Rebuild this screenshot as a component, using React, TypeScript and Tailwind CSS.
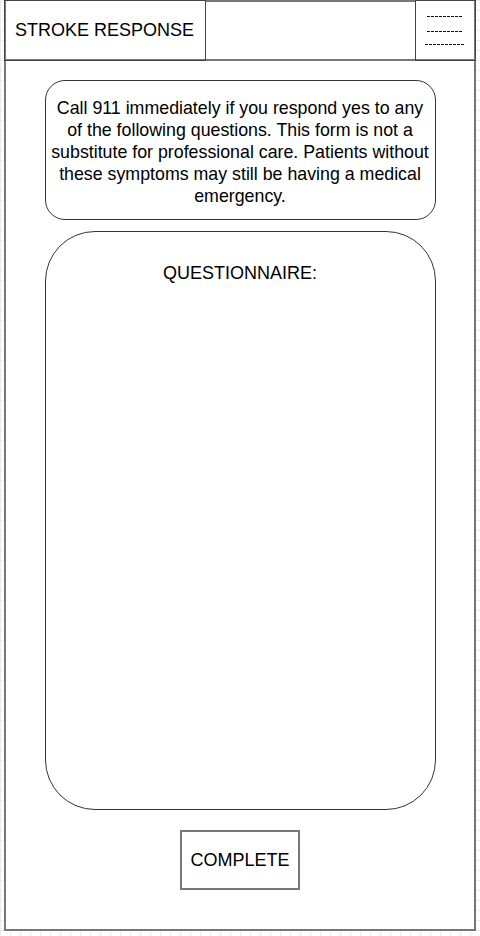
import React from 'react';

function MenuGlyph() {
  return (
    <svg width="60" height="60" viewBox="0 0 60 60" className="block">
      <line x1="11" y1="15.5" x2="46" y2="15.5" stroke="#111" strokeWidth="1" strokeDasharray="3 1" />
      <line x1="11" y1="30.5" x2="46" y2="30.5" stroke="#111" strokeWidth="1" strokeDasharray="3 1" />
      <line x1="9" y1="43.5" x2="48" y2="43.5" stroke="#111" strokeWidth="1" strokeDasharray="3 1" />
    </svg>
  );
}

const noticeLines = [
  'Call 911 immediately if you respond yes to any',
  'of the following questions. This form is not a',
  'substitute for professional care. Patients without',
  'these symptoms may still be having a medical',
  'emergency.',
];

export default function App() {
  return (
    <div className="w-[480px] h-[936px] bg-white bg-[linear-gradient(to_right,#ececec_1px,transparent_1px),linear-gradient(to_bottom,#ececec_1px,transparent_1px)] bg-[size:10px_10px] font-['Liberation_Sans',Arial,sans-serif] text-black overflow-hidden">
      <div className="ml-[4px] w-[472px] h-[931px] border-2 border-t-0 border-[#777] bg-white flex flex-col">
        {/* header */}
        <div className="flex h-[61px] border-b-2 border-[#777] -mx-[2px]">
          <div className="w-[202px] h-[61px] border border-[#444] flex items-center pl-[10px] text-[18px]">
            STROKE RESPONSE
          </div>
          <div className="flex-1 border-t-2 border-[#777]"></div>
          <div className="w-[61px] h-[61px] border border-[#444]">
            <MenuGlyph />
          </div>
        </div>

        {/* notice */}
        <div className="mt-[19px] mx-auto w-[391px] h-[140px] border border-[#333] rounded-[20px] flex flex-col items-center justify-center pt-[4px] text-center text-[17.8px] leading-[22px]">
          {noticeLines.map((line) => (
            <div key={line} className="whitespace-nowrap">{line}</div>
          ))}
        </div>

        {/* questionnaire */}
        <div className="mt-[11px] mx-auto w-[391px] h-[579px] border border-[#333] rounded-[50px] pt-[30px] text-center text-[18px] leading-[22px]">
          QUESTIONNAIRE:
        </div>

        {/* button */}
        <div className="mt-[20px] mx-auto w-[120px] h-[60px] border-2 border-[#777] flex items-center justify-center text-[18px]">
          COMPLETE
        </div>
      </div>
    </div>
  );
}
